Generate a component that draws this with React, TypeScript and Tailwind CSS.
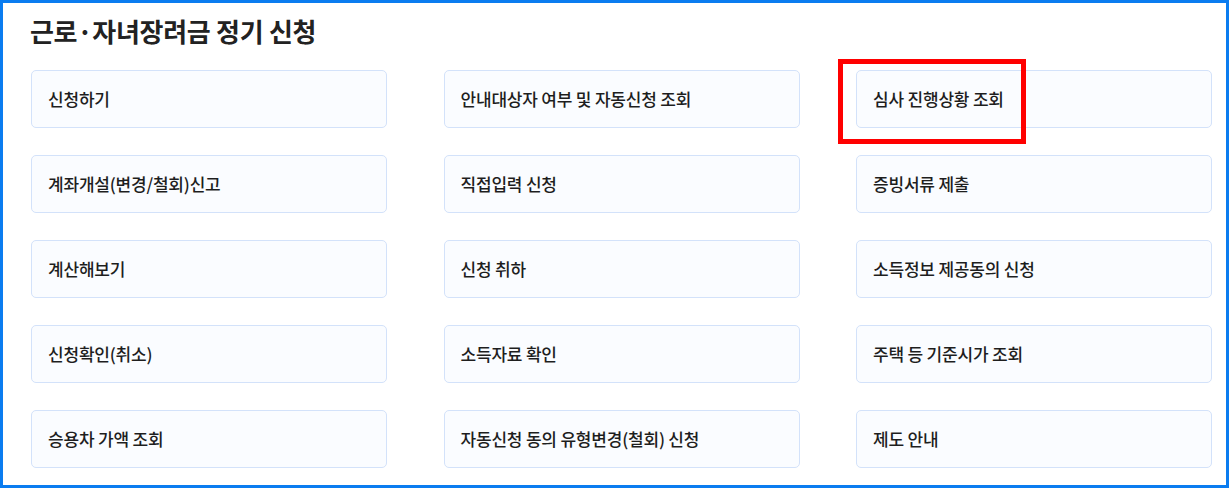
import React from "react"

const items = [
  "신청하기",
  "안내대상자 여부 및 자동신청 조회",
  "심사 진행상황 조회",
  "계좌개설(변경/철회)신고",
  "직접입력 신청",
  "증빙서류 제출",
  "계산해보기",
  "신청 취하",
  "소득정보 제공동의 신청",
  "신청확인(취소)",
  "소득자료 확인",
  "주택 등 기준시가 조회",
  "승용차 가액 조회",
  "자동신청 동의 유형변경(철회) 신청",
  "제도 안내",
]

export default function App() {
  return (
    <div className="w-[1231px] h-[488px] bg-white" style={{ fontFamily: '"Noto Sans CJK KR", "Noto Sans", sans-serif' }}>
      <div className="relative w-[1229px] h-[488px] border-[3px] border-[#0a7cf0] pl-[27px] pt-[9px]">
        <h1 className="text-[26px] leading-[38px] font-bold text-[#222] tracking-[-0.3px]">근로·자녀장려금 정기 신청</h1>

        <div className="mt-[20px] grid grid-cols-[356px_356px_356px] gap-x-[56.5px] gap-y-[27px] pl-px">
          {items.map((label) => (
            <div
              key={label}
              className="h-[58px] flex items-center px-[16px] rounded-[5px] border border-[#d3e2fa] bg-[#fafcff] text-[17px] font-medium text-[#1e1e1e] tracking-[-0.2px]"
            >
              {label}
            </div>
          ))}
        </div>

        {/* 강조 표시 */}
        <div className="absolute left-[835px] top-[56px] w-[188px] h-[85px] border-[5px] border-[#ff0000]" />
      </div>
    </div>
  )
}
